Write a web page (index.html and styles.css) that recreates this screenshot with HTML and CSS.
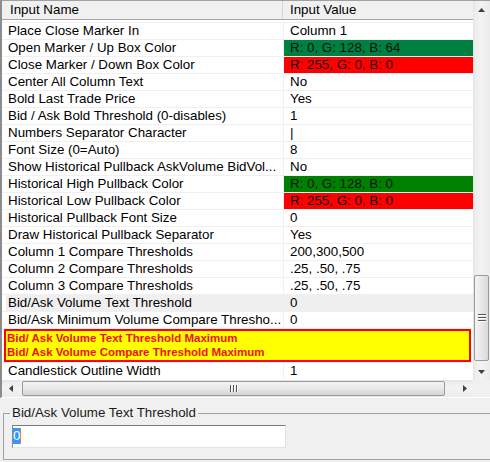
FILE: index.html
```html
<!DOCTYPE html>
<html>
<head>
<meta charset="utf-8">
<link rel="stylesheet" href="styles.css">
</head>
<body>
<div class="list">
  <div class="main">
    <div class="table">
      <div class="head">
        <div class="hname">Input Name</div>
        <div class="hval">Input Value</div>
      </div>
      <div class="rows">
        <div class="row"><div class="name">Place Close Marker In</div><div class="val">Column 1</div></div>
        <div class="row"><div class="name">Open Marker / Up Box Color</div><div class="val c-g64">R: 0, G: 128, B: 64</div></div>
        <div class="row"><div class="name">Close Marker / Down Box Color</div><div class="val c-r">R: 255, G: 0, B: 0</div></div>
        <div class="row"><div class="name">Center All Column Text</div><div class="val">No</div></div>
        <div class="row"><div class="name">Bold Last Trade Price</div><div class="val">Yes</div></div>
        <div class="row"><div class="name">Bid / Ask Bold Threshold (0-disables)</div><div class="val">1</div></div>
        <div class="row"><div class="name">Numbers Separator Character</div><div class="val">|</div></div>
        <div class="row"><div class="name">Font Size (0=Auto)</div><div class="val">8</div></div>
        <div class="row"><div class="name">Show Historical Pullback AskVolume BidVol...</div><div class="val">No</div></div>
        <div class="row"><div class="name">Historical High Pullback Color</div><div class="val c-g">R: 0, G: 128, B: 0</div></div>
        <div class="row"><div class="name">Historical Low Pullback Color</div><div class="val c-r">R: 255, G: 0, B: 0</div></div>
        <div class="row"><div class="name">Historical Pullback Font Size</div><div class="val">0</div></div>
        <div class="row"><div class="name">Draw Historical Pullback Separator</div><div class="val">Yes</div></div>
        <div class="row"><div class="name">Column 1 Compare Thresholds</div><div class="val">200,300,500</div></div>
        <div class="row"><div class="name">Column 2 Compare Thresholds</div><div class="val">.25, .50, .75</div></div>
        <div class="row"><div class="name">Column 3 Compare Thresholds</div><div class="val">.25, .50, .75</div></div>
        <div class="row hl"><div class="name">Bid/Ask Volume Text Threshold</div><div class="val">0</div></div>
        <div class="row"><div class="name">Bid/Ask Minimum Volume Compare Thresho...</div><div class="val">0</div></div>
        <div class="notice">
          <div class="notice-box">
            <div class="notice-line">Bid/ Ask Volume Text Threshold Maximum</div>
            <div class="notice-line">Bid/ Ask Volume Compare Threshold Maximum</div>
          </div>
        </div>
        <div class="row"><div class="name">Candlestick Outline Width</div><div class="val">1</div></div>
      </div>
    </div>
    <div class="vscroll">
      <div class="sbtn">
        <svg width="7" height="4" viewBox="0 0 7 4"><path d="M0 4 L3.5 0 L7 4 Z" fill="#404040"/></svg>
      </div>
      <div class="vtrack">
        <div class="vthumb">
          <div class="grip-h"></div>
          <div class="grip-h"></div>
          <div class="grip-h"></div>
        </div>
      </div>
      <div class="sbtn">
        <svg width="7" height="4" viewBox="0 0 7 4"><path d="M0 0 L3.5 4 L7 0 Z" fill="#404040"/></svg>
      </div>
    </div>
  </div>
  <div class="hbar">
    <div class="hscroll">
      <div class="hbtn">
        <svg width="4" height="7" viewBox="0 0 4 7"><path d="M4 0 L0 3.5 L4 7 Z" fill="#404040"/></svg>
      </div>
      <div class="htrack">
        <div class="hthumb">
          <div class="grip-v"></div>
          <div class="grip-v"></div>
          <div class="grip-v"></div>
        </div>
      </div>
      <div class="hbtn">
        <svg width="4" height="7" viewBox="0 0 4 7"><path d="M0 0 L4 3.5 L0 7 Z" fill="#404040"/></svg>
      </div>
    </div>
    <div class="corner"></div>
  </div>
</div>
<fieldset class="group">
  <legend class="group-title">Bid/Ask Volume Text Threshold</legend>
  <div class="textbox"><span class="sel">0</span></div>
</fieldset>
</body>
</html>
```

FILE: styles.css
```css
html, body {
  margin: 0;
  padding: 0;
}
body {
  width: 490px;
  height: 462px;
  overflow: hidden;
  background: #f0f0f0;
  font-family: "Liberation Sans", Arial, sans-serif;
  font-size: 13.33px;
  color: #000;
}
.list {
  width: 490px;
  box-sizing: border-box;
  border-left: 2px solid #8c8c8c;
  border-top: 1px solid #a0a0a0;
  border-bottom: 1px solid #ffffff;
  background: #fff;
}
.main {
  display: flex;
  height: 379px;
}
.table {
  width: 471px;
  display: flex;
  flex-direction: column;
}
.head {
  display: flex;
  height: 19px;
  box-sizing: border-box;
  border-bottom: 1px solid #a5a5a5;
  background: #f0f0f0;
  line-height: 18px;
}
.hname {
  width: 281px;
  box-sizing: border-box;
  border-right: 1px solid #d5d5d5;
  padding-left: 8px;
}
.hval {
  padding-left: 7px;
}
.rows {
  padding-top: 2px;
}
.row {
  display: flex;
  height: 17px;
  box-sizing: border-box;
  border-top: 1px solid #f0f0f0;
  line-height: 16px;
}
.row.hl {
  background: linear-gradient(to right, #fff 4px, #efefef 4px);
}
.name {
  width: 282px;
  box-sizing: border-box;
  border-right: 1px solid #f0f0f0;
  padding-left: 6px;
  white-space: nowrap;
  overflow: hidden;
}
.val {
  flex: 1;
  padding-left: 6px;
  white-space: nowrap;
}
.c-g64 { background: #008040; color: #101010; }
.c-g { background: #008000; color: #101010; }
.c-r { background: #ff0000; color: #101010; }
.notice {
  height: 34px;
  box-sizing: border-box;
  border-top: 1px solid #f0f0f0;
  padding-left: 2px;
}
.notice-box {
  width: 467px;
  height: 33px;
  box-sizing: border-box;
  border: 2px solid #ff0000;
  background: #ffff00;
  padding: 0 1px;
}
.notice-line {
  font-weight: bold;
  font-size: 11.5px;
  line-height: 14px;
  color: #f01010;
  white-space: nowrap;
}
.vscroll {
  width: 17px;
  display: flex;
  flex-direction: column;
  background: linear-gradient(to right, #e2e2e2 0, #ededed 2px, #f3f3f3 50%, #ebebeb 100%);
}
.sbtn {
  height: 17px;
  display: flex;
  align-items: center;
  justify-content: center;
}
.vtrack {
  flex: 1;
  display: flex;
  flex-direction: column;
}
.vthumb {
  margin: 257px 1px 0 1px;
  height: 86px;
  box-sizing: border-box;
  border: 1px solid #9a9a9a;
  border-radius: 2px;
  background: linear-gradient(to right, #f4f4f4, #e8e8e8 50%, #d9d9d9);
  display: flex;
  flex-direction: column;
  align-items: center;
  justify-content: center;
  gap: 1px;
}
.grip-h {
  width: 8px;
  height: 1px;
  background: #555;
  box-shadow: 0 1px 0 #fff;
  margin-bottom: 1px;
}
.hbar {
  display: flex;
  height: 17px;
}
.hscroll {
  width: 471px;
  display: flex;
  background: linear-gradient(to bottom, #e2e2e2 0, #ededed 2px, #f3f3f3 50%, #ebebeb 100%);
}
.hbtn {
  width: 17px;
  display: flex;
  align-items: center;
  justify-content: center;
}
.htrack {
  flex: 1;
  display: flex;
}
.hthumb {
  margin: 1px 0 1px 3px;
  width: 423px;
  box-sizing: border-box;
  border: 1px solid #9a9a9a;
  border-radius: 2px;
  background: linear-gradient(to bottom, #f4f4f4, #e8e8e8 50%, #d4d4d4);
  display: flex;
  align-items: center;
  justify-content: center;
  gap: 1px;
}
.grip-v {
  width: 1px;
  height: 7px;
  background: #555;
  box-shadow: 1px 0 0 #fff;
  margin-right: 1px;
}
.corner {
  width: 17px;
  background: #f0f0f0;
}
.group {
  margin: 7px 0 0 3px;
  padding: 0 0 11px 6px;
  width: 500px;
  border: 1px solid #a0a0a0;
  border-right: none;
  box-sizing: border-box;
}
.group-title {
  padding: 0 2px;
  line-height: 16px;
  color: #1a1a1a;
}
.textbox {
  margin: 4px 0 0 2px;
  width: 274px;
  height: 23px;
  box-sizing: border-box;
  border: 1px solid #e3e3e3;
  border-top-color: #7a7a7a;
  border-left-color: #8a8a8a;
  background: #fff;
  padding-top: 2px;
}
.sel {
  display: inline-block;
  height: 16px;
  line-height: 16px;
  background: #3399ff;
  color: #fff;
  border-right: 1px solid #d08040;
}
```
